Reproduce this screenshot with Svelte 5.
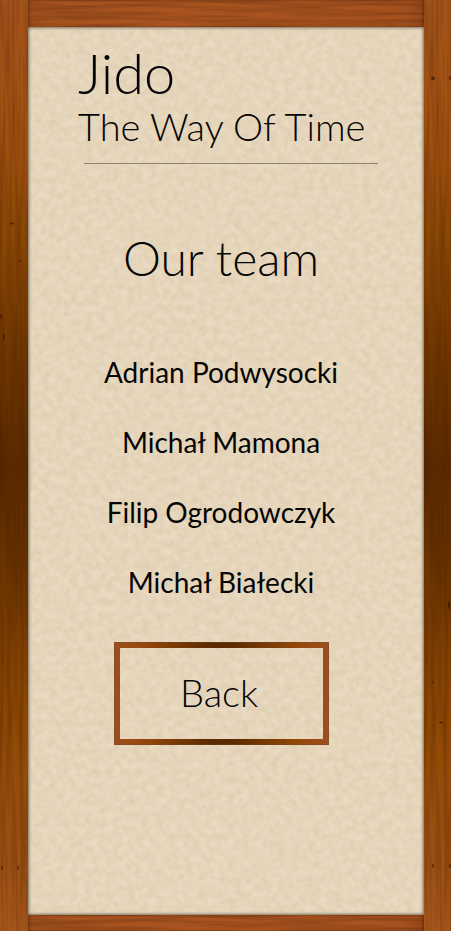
<script>
  const team = ['Adrian Podwysocki', 'Michał Mamona', 'Filip Ogrodowczyk', 'Michał Białecki'];
</script>

{#snippet grain(id, frequency, matrix)}
  <svg class="grain" aria-hidden="true">
    <filter {id} x="0" y="0" width="100%" height="100%" color-interpolation-filters="sRGB">
      <feTurbulence type="fractalNoise" baseFrequency={frequency} numOctaves="3" seed="7" />
      <feColorMatrix values={matrix} />
    </filter>
    <rect width="100%" height="100%" filter="url(#{id})" />
  </svg>
{/snippet}

{#snippet knots(points)}
  <svg class="grain" aria-hidden="true">
    {#each points as [x, y, w, h]}
      <ellipse cx={x} cy="{y}%" rx={w} ry={h} fill="#2b1200" opacity="0.6" />
    {/each}
  </svg>
{/snippet}

<div class="frame">
  <div class="stile left">
    {@render grain('grain-left', '0.25 0.01', '0 0 0 0 0.2  0 0 0 0 0.07  0 0 0 0 0  0.6 0 0 0 -0.22')}
    {@render knots([[12, 24, 2, 1], [20, 28, 1, 1], [4, 36.2, 1, 3], [1, 34, 1, 2], [2, 93.2, 1, 2], [18, 93.2, 1, 2]])}
  </div>
  <div class="rail top">
    {@render grain('grain-top', '0.01 0.25', '0 0 0 0 0.2  0 0 0 0 0.07  0 0 0 0 0  0.6 0 0 0 -0.2')}
  </div>
  <main class="paper">
    {@render grain('grain-paper', '0.14', '0 0 0 0 0.74  0 0 0 0 0.61  0 0 0 0 0.45  0.35 0 0 0 -0.08')}
    <header>
      <h1>Jido</h1>
      <p class="tagline">The Way Of Time</p>
      <hr />
    </header>
    <div class="content">
      <h2>Our team</h2>
      <ul>
        {#each team as member}
          <li>{member}</li>
        {/each}
      </ul>
      <button type="button">Back</button>
    </div>
  </main>
  <div class="rail bottom">
    {@render grain('grain-bottom', '0.01 0.25', '0 0 0 0 0.2  0 0 0 0 0.07  0 0 0 0 0  0.6 0 0 0 -0.2')}
  </div>
  <div class="stile right">
    {@render grain('grain-right', '0.25 0.01', '0 0 0 0 0.2  0 0 0 0 0.07  0 0 0 0 0  0.6 0 0 0 -0.22')}
    {@render knots([[9, 8.4, 2, 2], [26, 8.4, 1, 2], [25, 65, 1, 4], [9, 73.3, 1, 1], [17, 77.6, 2, 1], [9, 93, 1, 2], [26, 93, 1, 2]])}
  </div>
</div>

<style>
  :global(body) {
    margin: 0;
  }

  .frame {
    display: grid;
    grid-template: 27px 1fr 16px / 28px minmax(0, 1fr) 27px;
    min-height: 100vh;
    color: #050505;
    font-family: Lato, 'Noto Sans', sans-serif;
  }

  .stile,
  .rail {
    position: relative;
    overflow: hidden;
  }

  .stile {
    grid-row: 1 / 4;
    background: linear-gradient(#a4541b 0%, #a0500f 15%, #8b4704 25%, #6d3400 40%, #592900 50%, #6a3300 61%, #8f4803 78%, #a5561b 100%);
  }

  .left {
    grid-column: 1;
  }

  .right {
    grid-column: 3;
  }

  .rail {
    grid-column: 2;
    background: linear-gradient(90deg, #a0511c, #aa5520 5%, #a8531f 95%, #97491a);
    box-shadow: inset 2px 0 2px rgba(70, 25, 0, 0.35), inset -2px 0 2px rgba(70, 25, 0, 0.35);
  }

  .top {
    grid-row: 1;
  }

  .bottom {
    grid-row: 3;
  }

  .grain {
    position: absolute;
    inset: 0;
    width: 100%;
    height: 100%;
    pointer-events: none;
  }

  .paper {
    grid-area: 2 / 2;
    position: relative;
    box-sizing: border-box;
    padding: 14px 46px 16px 50px;
    background: #e9dbc2;
    box-shadow: inset 0 0 3px 1px rgba(70, 65, 55, 0.75);
  }

  header,
  .content {
    position: relative;
  }

  h1,
  h2,
  .tagline {
    margin: 0;
    font-weight: 300;
  }

  h1 {
    font-size: 56px;
    line-height: 64px;
  }

  .tagline {
    font-size: 38px;
    line-height: 42px;
    white-space: nowrap;
  }

  hr {
    height: 1px;
    margin: 16px 0 0 6px;
    border: 0;
    background: #8d8475;
  }

  .content {
    margin: 62px 14px 0 0;
    text-align: center;
  }

  h2 {
    font-size: 48px;
    line-height: 64px;
  }

  ul {
    display: grid;
    gap: 30px;
    margin: 62px 0 0;
    padding: 0;
    list-style: none;
  }

  li {
    font-size: 28px;
    line-height: 40px;
  }

  button {
    display: block;
    width: 215px;
    height: 103px;
    margin: 40px auto 0;
    padding: 0 4px 4px 0;
    border: 6px solid;
    border-image: linear-gradient(90deg, #9c4f20, #98480a 12%, #5a2b00 45%, #5a2b00 55%, #984a0a 88%, #9c4f20) 6;
    outline: 1px solid rgba(110, 75, 45, 0.4);
    outline-offset: -1px;
    background: transparent;
    color: inherit;
    font-family: inherit;
    font-size: 38px;
    font-weight: 300;
    cursor: pointer;
  }
</style>
